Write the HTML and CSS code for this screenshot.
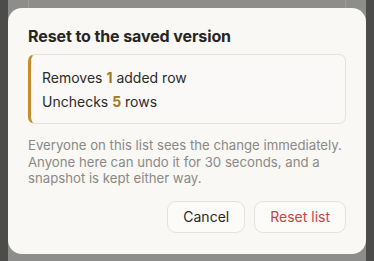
FILE: index.html
```html
<!DOCTYPE html>
<html lang="en">

<head>
    <meta charset="UTF-8">
    <meta name="viewport" content="width=device-width, initial-scale=1.0">
    <title>Reset list</title>
    <link rel="stylesheet" href="styles.css">
</head>

<body>
    <div class="backdrop">
        <div class="page-card"></div>
    </div>

    <div class="dialog" role="dialog" aria-labelledby="dialogTitle">
        <h2 id="dialogTitle">Reset to the saved version</h2>

        <!-- What will change -->
        <div class="changes">
            <p>Removes <strong>1</strong> added row</p>
            <p>Unchecks <strong>5</strong> rows</p>
        </div>

        <p class="note">Everyone on this list sees the change immediately. Anyone here can undo it for 30 seconds, and a snapshot is kept either way.</p>

        <div class="actions">
            <button type="button" class="btn">Cancel</button>
            <button type="button" class="btn btn-danger">Reset list</button>
        </div>
    </div>
</body>

</html>
```

FILE: styles.css
```css
body {
    margin: 0;
    height: 261px;
    overflow: hidden;
    background-color: #4c4d4a;
    font-family: Inter, "Noto Sans", sans-serif;
}

.backdrop {
    position: absolute;
    top: 0;
    left: 8px;
    right: 8px;
    bottom: 0;
    background-color: #8d8d8b;
}

.page-card {
    position: absolute;
    top: -10px;
    left: 20px;
    right: 20px;
    height: 60px;
    border: 1px solid #9c9c9a;
    border-radius: 10px;
}

.dialog {
    position: absolute;
    top: 8px;
    left: 8px;
    width: 358px;
    height: 246px;
    box-sizing: border-box;
    padding: 18px 20px 0 20px;
    background-color: #f9f8f5;
    border-radius: 14px;
}

.dialog h2 {
    margin: 0 0 8px;
    font-size: 16px;
    font-weight: 700;
    line-height: 20px;
    color: #262624;
    letter-spacing: -0.1px;
}

.changes {
    border: 1px solid #e6e3dd;
    border-left: 3px solid #c58b2c;
    border-radius: 7px;
    padding: 11px 12px 9px 11px;
    background-color: #faf9f7;
}

.changes p {
    margin: 0;
    font-size: 14px;
    line-height: 24px;
    color: #2c2b29;
}

.changes strong {
    color: #a2781d;
    font-weight: 700;
}

.note {
    margin: 13px 0 0;
    font-size: 13.2px;
    line-height: 16.5px;
    color: #8b8985;
}

.actions {
    display: flex;
    justify-content: flex-end;
    gap: 9px;
    margin-top: 14px;
}

.btn {
    height: 32px;
    padding: 0 15px;
    border: 1px solid #e5e2dd;
    border-radius: 9px;
    background-color: #fcfbf9;
    font-family: inherit;
    font-size: 14px;
    color: #2a2927;
    cursor: pointer;
}

.btn-danger {
    color: #c7433e;
}
```
